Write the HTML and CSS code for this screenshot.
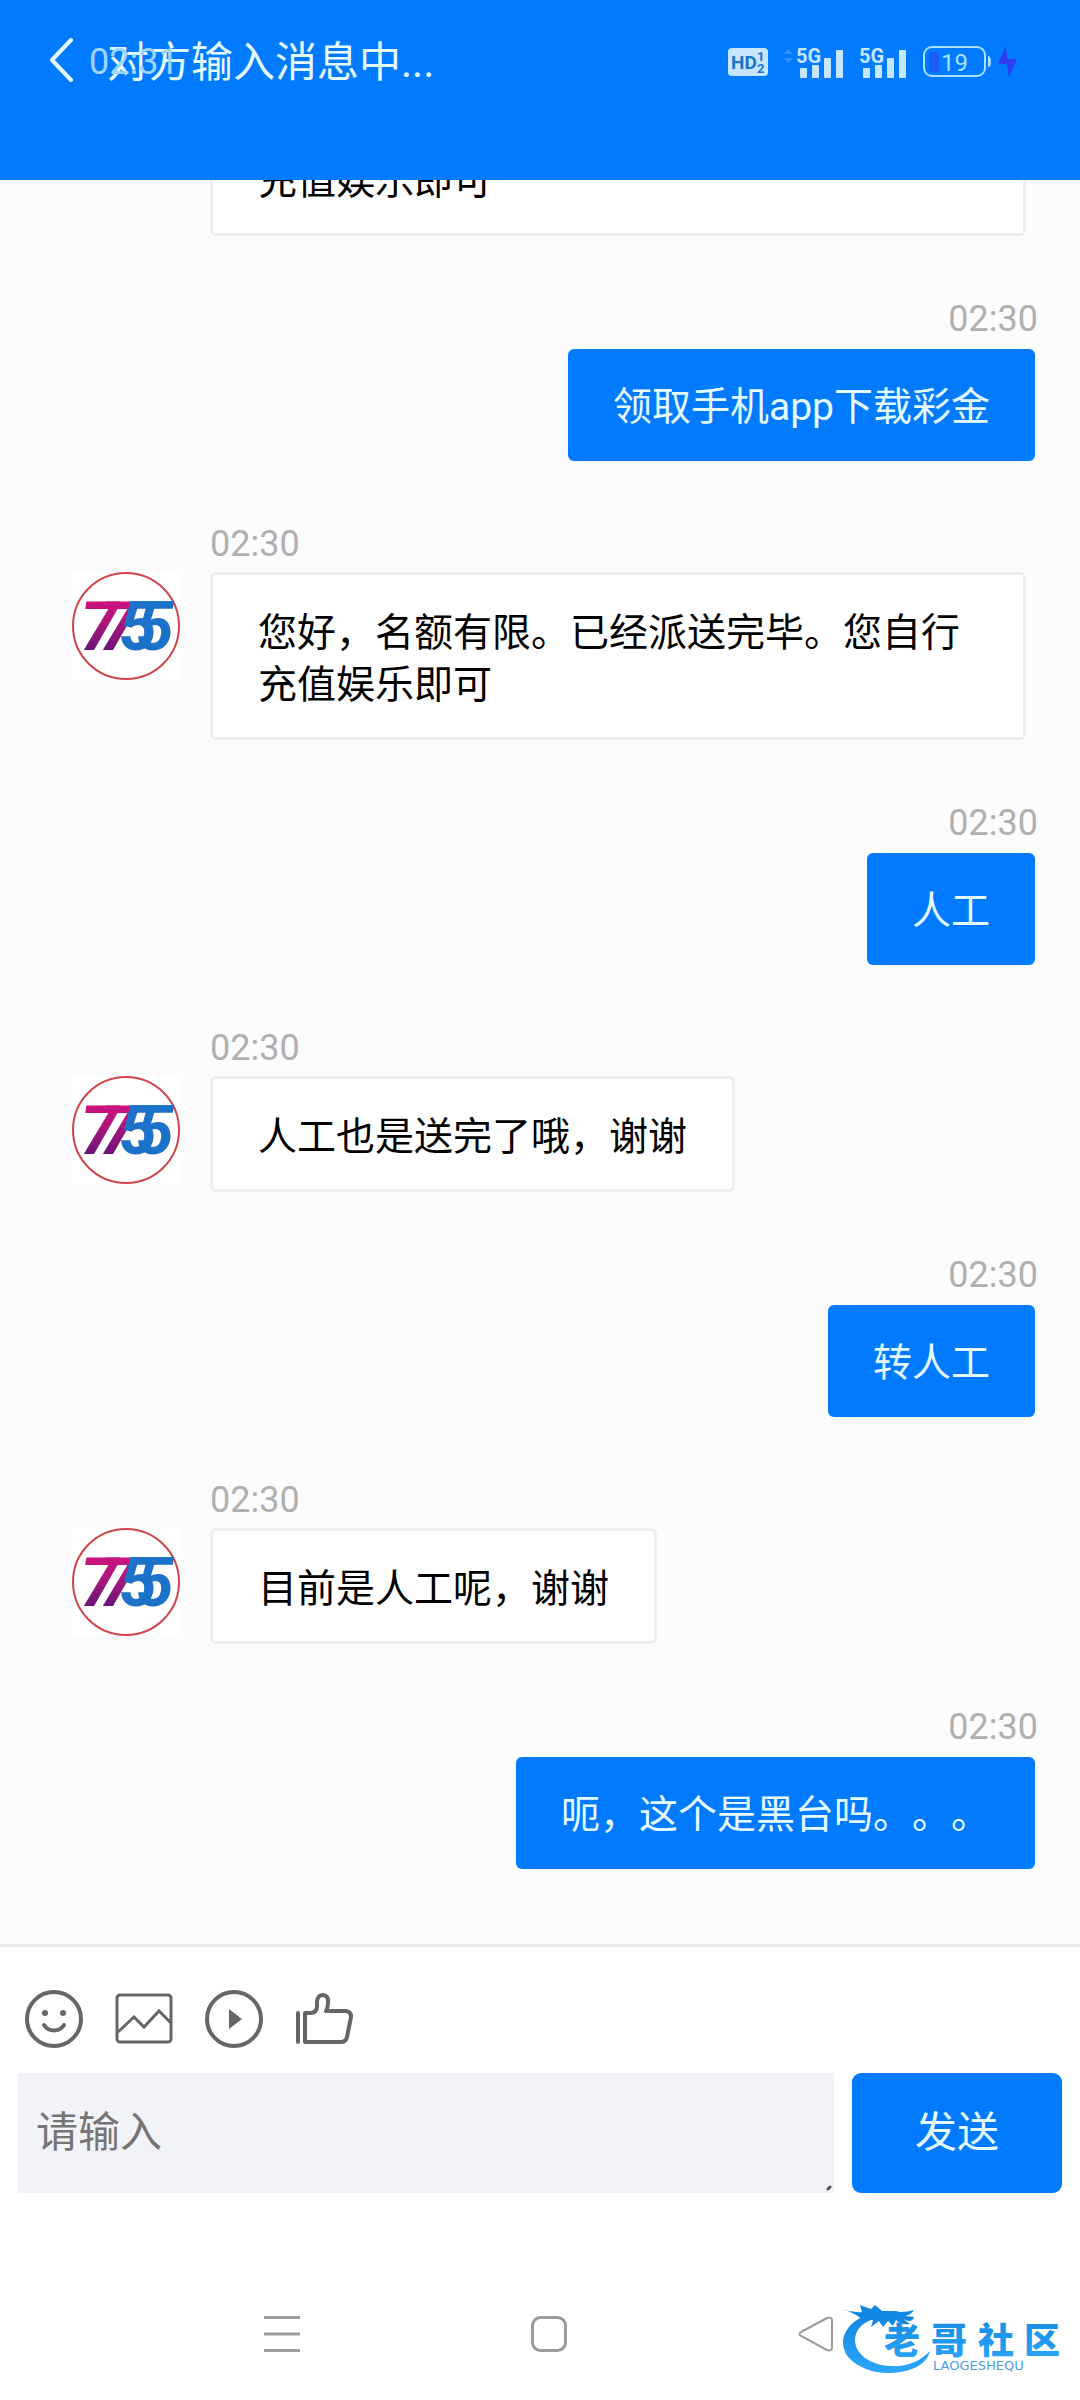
FILE: index.html
```html
<!DOCTYPE html>
<html lang="zh-CN">
<head>
<meta charset="utf-8">
<meta name="viewport" content="width=device-width, initial-scale=1">
<title>在线客服</title>
<link rel="stylesheet" href="styles.css">
</head>
<body>
<svg class="defs" aria-hidden="true">
  <defs>
    <linearGradient id="pink" x1="0" y1="0" x2="0" y2="1">
      <stop offset="0" stop-color="#e0107f"/>
      <stop offset="0.4" stop-color="#b5167c"/>
      <stop offset="1" stop-color="#3c1478"/>
    </linearGradient>
    <linearGradient id="sky" x1="0" y1="0" x2="0" y2="1">
      <stop offset="0" stop-color="#1488e0"/>
      <stop offset="1" stop-color="#2aa6fa"/>
    </linearGradient>
    <symbol id="brand" viewBox="0 0 108 108">
      <rect width="108" height="108" fill="#fff"/>
      <circle cx="54" cy="54" r="53" fill="#fff" stroke="#d0444c" stroke-width="2"/>
      <text class="brand-digits" x="8 27" y="78" fill="url(#pink)">77</text>
      <text class="brand-digits" x="47 64" y="78" fill="#1b72c8">55</text>
    </symbol>
  </defs>
</svg>
<div class="app">
  <header class="header">
    <div class="title-row">
      <button class="back" type="button" aria-label="返回">
        <svg width="24" height="44" viewBox="0 0 24 44"><path d="M21 2 2 22 21 42" fill="none" stroke="#e4fbff" stroke-width="4" stroke-linecap="round" stroke-linejoin="round"/></svg>
      </button>
      <h1 class="title">对方输入消息中...</h1>
    </div>
    <div class="status">
      <span class="clock">02:31</span>
      <div class="indicators">
        <svg width="40" height="28" viewBox="0 0 40 28">
          <rect width="40" height="28" rx="4" fill="#c4e6ff"/>
          <text class="hd" x="3" y="21">HD</text>
          <text class="hd-sub" x="29" y="13">1</text>
          <text class="hd-sub" x="29" y="25">2</text>
        </svg>
        <div class="signals">
          <svg width="60" height="34" viewBox="0 0 60 34">
            <path d="M0 9 4 4 9 9ZM0 13 4 18 9 13Z" fill="#2c90ff"/>
            <text class="net" x="12" y="18">5G</text>
            <path d="M17 24h5v8h-5zM29 21h5v11h-5zM41 14h5v18h-5zM53 6h5v26h-5z" fill="#c4e6ff" stroke="#c4e6ff" stroke-width="2" stroke-linejoin="round"/>
          </svg>
          <svg width="48" height="34" viewBox="12 0 48 34">
            <text class="net" x="12" y="18">5G</text>
            <path d="M17 24h5v8h-5zM29 21h5v11h-5zM41 14h5v18h-5zM53 6h5v26h-5z" fill="#c4e6ff" stroke="#c4e6ff" stroke-width="2" stroke-linejoin="round"/>
          </svg>
        </div>
        <svg width="96" height="32" viewBox="0 0 96 32">
          <rect x="1" y="1" width="61" height="29" rx="8" fill="none" stroke="#a8e0ff" stroke-width="2"/>
          <path d="M16 6v20h-6a4 4 0 0 1-4-4V10a4 4 0 0 1 4-4z" fill="#1c5cf4"/>
          <path d="M65 10q3 0 3 5.500t-3 5.500z" fill="#a8e0ff"/>
          <text class="level" x="18" y="25">19</text>
          <path d="M83 0 75 18h9l2 13L94 13H84Z" fill="#2f3cf0"/>
        </svg>
      </div>
    </div>
  </header>

  <main class="chat">
    <article class="msg theirs">
      <time class="time">02:30</time>
      <div class="line">
        <svg class="avatar" role="img" aria-label="客服头像"><use href="#brand"/></svg>
        <p class="bubble">您好，名额有限。已经派送完毕。您自行充值娱乐即可</p>
      </div>
    </article>
    <article class="msg mine">
      <time class="time">02:30</time>
      <p class="bubble">领取手机app下载彩金</p>
    </article>
    <article class="msg theirs">
      <time class="time">02:30</time>
      <div class="line">
        <svg class="avatar" role="img" aria-label="客服头像"><use href="#brand"/></svg>
        <p class="bubble">您好，名额有限。已经派送完毕。您自行充值娱乐即可</p>
      </div>
    </article>
    <article class="msg mine">
      <time class="time">02:30</time>
      <p class="bubble">人工</p>
    </article>
    <article class="msg theirs">
      <time class="time">02:30</time>
      <div class="line">
        <svg class="avatar" role="img" aria-label="客服头像"><use href="#brand"/></svg>
        <p class="bubble">人工也是送完了哦，谢谢</p>
      </div>
    </article>
    <article class="msg mine">
      <time class="time">02:30</time>
      <p class="bubble">转人工</p>
    </article>
    <article class="msg theirs">
      <time class="time">02:30</time>
      <div class="line">
        <svg class="avatar" role="img" aria-label="客服头像"><use href="#brand"/></svg>
        <p class="bubble">目前是人工呢，谢谢</p>
      </div>
    </article>
    <article class="msg mine">
      <time class="time">02:30</time>
      <p class="bubble">呃，这个是黑台吗。。。</p>
    </article>
  </main>

  <form class="composer">
    <div class="tools">
      <button type="button" aria-label="表情">
        <svg width="58" height="60" viewBox="1 0 58 60" fill="none" stroke="#666" stroke-width="4">
          <circle cx="30" cy="30" r="27"/>
          <circle cx="21" cy="24" r="3" fill="#666" stroke="none"/><circle cx="39" cy="24" r="3" fill="#666" stroke="none"/>
          <path d="M20 36q3.500 5.500 10 5.500T40 36" stroke-linecap="round"/>
        </svg>
      </button>
      <button type="button" aria-label="图片">
        <svg width="58" height="60" viewBox="1 0 58 60" fill="none" stroke="#666" stroke-width="3">
          <rect x="3" y="6" width="54" height="47" rx="3"/>
          <path d="M4 43 20 28 30 38 45 22 57 34"/>
        </svg>
      </button>
      <button type="button" aria-label="视频">
        <svg width="58" height="60" viewBox="1 0 58 60">
          <circle cx="30" cy="30" r="27" fill="none" stroke="#666" stroke-width="4"/>
          <path d="M25 20 38 30 25 40Z" fill="#666"/>
        </svg>
      </button>
      <button type="button" aria-label="评价">
        <svg width="58" height="60" viewBox="2 0 58 60" fill="none" stroke="#666" stroke-width="4" stroke-linecap="round" stroke-linejoin="round">
          <path d="M5 24V53M12 53V24H17Q24 24 24 17V12Q25 6 30 6 36 7 35 14 35 19 33 22H52Q58 22 58 28L54 48Q53 53 48 53Z"/>
        </svg>
      </button>
    </div>
    <div class="entry">
      <div class="field">
        <textarea class="input" rows="1" aria-label="消息" placeholder="请输入"></textarea>
        <svg class="grip" width="6" height="6" viewBox="0 0 6 6" aria-hidden="true"><path d="M2 4 4 2" stroke="#555" stroke-width="3" stroke-linecap="round"/></svg>
      </div>
      <button class="send" type="submit">发送</button>
    </div>
  </form>

  <nav class="nav" aria-label="系统导航">
    <button type="button" aria-label="最近任务"><svg width="36" height="36" viewBox="0 0 36 36"><path d="M0 1.500H36M0 18H36M0 34.500H36" stroke="#9b9b9b" stroke-width="3"/></svg></button>
    <button type="button" aria-label="主屏幕"><svg width="36" height="36" viewBox="0 0 36 36"><rect x="1.500" y="1.500" width="33" height="33" rx="8" fill="none" stroke="#9b9b9b" stroke-width="3"/></svg></button>
    <button type="button" aria-label="返回"><svg width="36" height="36" viewBox="0 0 36 36"><path d="M3 16 29 2Q34 0 34 5V31Q34 36 29 34L3 20Q0 18 3 16Z" fill="none" stroke="#9b9b9b" stroke-width="2"/></svg></button>
  </nav>

  <svg class="watermark" width="230" height="90" viewBox="0 0 230 90" role="img" aria-label="老哥社区">
    <path d="M28 20C5 27-4 48 9 63C18 73 36 79 50 78C70 77 86 71 90 56C80 67 66 72 50 71C30 70 15 59 15 45C15 35 22 27 37 23Z" fill="url(#sky)"/>
    <path d="M3 14Q12 18 22 17L20 10 31 14 35 10 42 16 56 16 60 17Q68 17 74 15 71 20 65 21L74 22Q72 29 63 24L70 29Q60 30 56 25L53 31 48 26 43 32 39 26 31 32 33 25 22 24Q14 18 3 14Z" fill="#1188e4"/>
    <text class="wm-name" x="44 91 138 184" y="59" fill="url(#sky)">老哥社区</text>
    <text class="wm-latin" x="93" y="75">LAOGESHEQU</text>
  </svg>
</div>
</body>
</html>
```
FILE: styles.css
```css
* {
  box-sizing: border-box;
}

body {
  margin: 0;
  background: #fff;
  color: #000;
  font-family: Roboto, "Noto Sans CJK SC", sans-serif;
  text-spacing-trim: space-all;
}

h1,
p {
  margin: 0;
  font-weight: 400;
}

button {
  padding: 0;
  border: 0;
  background: none;
  font: inherit;
}

svg {
  display: block;
}

.defs {
  position: absolute;
  width: 0;
  height: 0;
}

.app {
  position: relative;
  display: flex;
  flex-direction: column;
  height: 100vh;
}

/* Header */
.header {
  position: relative;
  flex: none;
  height: 180px;
  background: #007aff;
}

.title-row {
  display: flex;
  align-items: center;
  gap: 33px;
  height: 120px;
  padding-left: 50px;
}

.title {
  padding-top: 6px;
  color: #e4fbff;
  font-size: 42px;
  line-height: 60px;
}

.status {
  position: absolute;
  inset: 0 61px auto 89px;
  display: flex;
  align-items: center;
  justify-content: space-between;
  height: 124px;
}

.clock {
  color: #9cd6ff;
  font-size: 36px;
  line-height: 42px;
}

.indicators {
  display: flex;
  align-items: center;
  gap: 16px;
}

.signals {
  display: flex;
  gap: 15px;
  align-items: center;
}

.hd {
  font: 700 19px Roboto, sans-serif;
  fill: #1a74cc;
}

.hd-sub {
  font: 700 13px Roboto, sans-serif;
  fill: #1a74cc;
}

.net {
  font: 700 20px Roboto, sans-serif;
  fill: #c4e6ff;
}

.level {
  font: 400 24px Roboto, sans-serif;
  fill: #a8e0ff;
}

/* Conversation */
.chat {
  display: flex;
  flex: 1;
  flex-direction: column;
  justify-content: flex-end;
  gap: 62px;
  min-height: 0;
  padding-bottom: 75px;
  overflow: hidden;
  background: #fcfcfc;
}

.msg {
  display: flex;
  flex: none;
  flex-direction: column;
}

.time {
  color: #b0b0b0;
  font-size: 36px;
  line-height: 42px;
}

.bubble {
  border-radius: 6px;
  font-size: 39px;
  line-height: 52px;
}

.mine {
  align-items: flex-end;
  gap: 9px;
  padding: 0 45px 0 72px;
}

.mine .time {
  margin-right: -3px;
}

.mine .bubble {
  padding: 32px 45px 28px;
  background: #007aff;
  color: #e4fbff;
}

.theirs {
  gap: 7px;
  padding: 0 54px 0 72px;
}

.theirs .time {
  padding-left: 138px;
}

.line {
  display: flex;
  align-items: flex-start;
  gap: 30px;
}

.avatar {
  flex: none;
  width: 108px;
  height: 108px;
}

.brand-digits {
  font: italic 700 68px Roboto, sans-serif;
}

.theirs .bubble {
  padding: 32px 45px 26px;
  border: 3px solid #efefef;
  background: #fff;
}

/* Composer */
.composer {
  flex: none;
  padding: 42px 18px 75px;
  border-top: 3px solid #ebebeb;
  background: #fff;
}

.tools {
  display: flex;
  gap: 32px;
  padding-left: 7px;
}

.entry {
  display: flex;
  gap: 18px;
  margin-top: 24px;
}

.field {
  position: relative;
  flex: 1;
}

.input {
  display: block;
  width: 100%;
  height: 120px;
  padding: 30px 18px;
  border: 0;
  background: #f2f3f8;
  font: inherit;
  font-size: 42px;
  line-height: 60px;
  resize: none;
}

.input::placeholder {
  color: #757575;
}

.grip {
  position: absolute;
  right: 2px;
  bottom: 2px;
}

.send {
  flex: none;
  width: 210px;
  border-radius: 9px;
  background: #007aff;
  color: #e4fbff;
  font-size: 42px;
  line-height: 60px;
}

/* System navigation */
.nav {
  display: grid;
  flex: none;
  grid-template-columns: repeat(3, 1fr);
  align-items: center;
  justify-items: center;
  height: 132px;
  padding: 0 131px 0 149px;
}

.watermark {
  position: absolute;
  right: 10px;
  bottom: 15px;
}

.wm-name {
  font: 900 36px "Noto Sans CJK SC", sans-serif;
}

.wm-latin {
  font: 400 13px "DejaVu Sans", sans-serif;
  fill: #4aa0e6;
}
```
